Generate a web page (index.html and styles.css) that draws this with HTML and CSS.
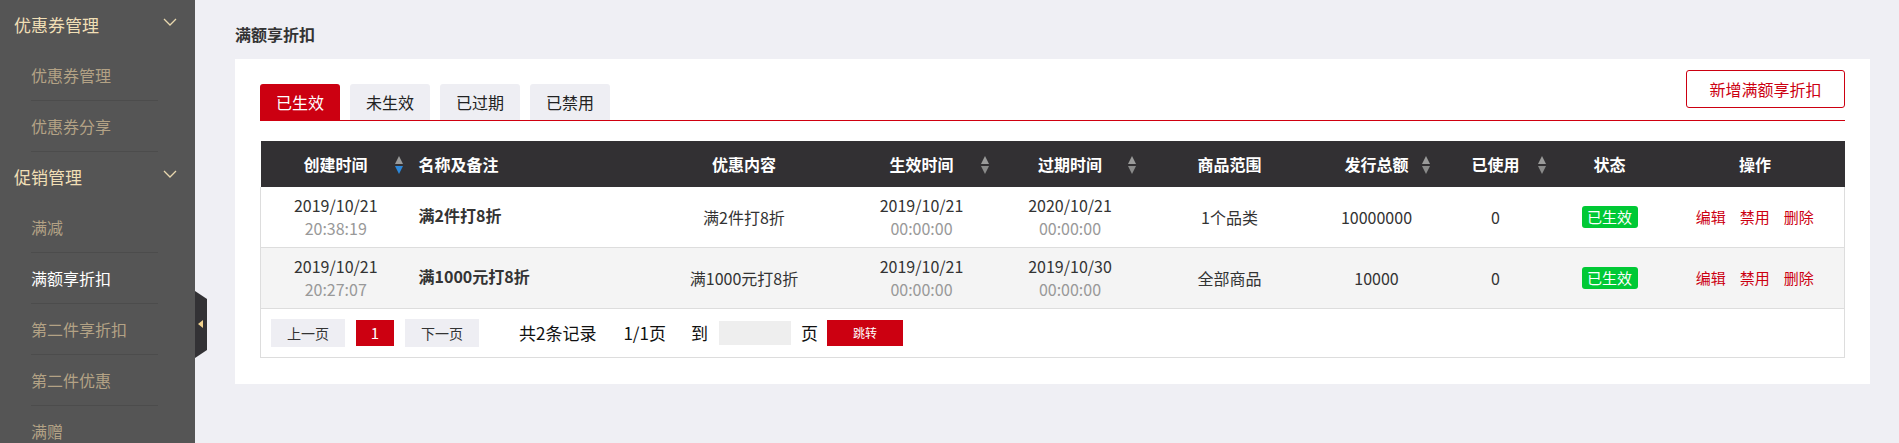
FILE: index.html
```html
<!DOCTYPE html>
<html lang="zh-CN">
<head>
    <meta charset="UTF-8">
    <meta name="viewport" content="width=device-width, initial-scale=1.0">
    <title>满额享折扣</title>
    <link rel="stylesheet" href="styles.css">
</head>
<body>
    <div class="layout">
        <aside class="sidebar">
            <div class="menu-group">
                <div class="menu-title">优惠券管理
                    <svg class="chevron" width="14" height="8" viewBox="0 0 14 8"><polyline points="1,1 7,7 13,1" fill="none" stroke="#e9d8ae" stroke-width="1.3"/></svg>
                </div>
                <ul class="menu-list">
                    <li>优惠券管理</li>
                    <li>优惠券分享</li>
                </ul>
            </div>
            <div class="menu-group">
                <div class="menu-title">促销管理
                    <svg class="chevron" width="14" height="8" viewBox="0 0 14 8"><polyline points="1,1 7,7 13,1" fill="none" stroke="#e9d8ae" stroke-width="1.3"/></svg>
                </div>
                <ul class="menu-list">
                    <li>满减</li>
                    <li class="active">满额享折扣</li>
                    <li>第二件享折扣</li>
                    <li>第二件优惠</li>
                    <li>满赠</li>
                </ul>
            </div>
        </aside>
        <div class="sidebar-toggle"><span class="toggle-arrow"></span></div>

        <main class="main">
            <h2 class="page-title">满额享折扣</h2>
            <div class="panel">
                <div class="toolbar">
                    <div class="tabs">
                        <div class="tab active">已生效</div>
                        <div class="tab">未生效</div>
                        <div class="tab">已过期</div>
                        <div class="tab">已禁用</div>
                    </div>
                    <button class="add-button">新增满额享折扣</button>
                </div>

                <table class="data-table">
                    <colgroup>
                        <col style="width:150px">
                        <col style="width:231px">
                        <col style="width:205px">
                        <col style="width:150px">
                        <col style="width:147px">
                        <col style="width:172px">
                        <col style="width:122px">
                        <col style="width:116px">
                        <col style="width:112px">
                        <col style="width:179px">
                    </colgroup>
                    <thead>
                        <tr>
                            <th class="sortable">创建时间
                                <svg class="sort" width="8" height="18" viewBox="0 0 8 18"><polygon points="0,8 4,0 8,8" fill="#9a9a9a"/><polygon points="0,10 8,10 4,18" fill="#2d87d9"/></svg>
                            </th>
                            <th class="left">名称及备注</th>
                            <th>优惠内容</th>
                            <th class="sortable">生效时间
                                <svg class="sort" width="8" height="18" viewBox="0 0 8 18"><polygon points="0,8 4,0 8,8" fill="#9a9a9a"/><polygon points="0,10 8,10 4,18" fill="#8a8a8a"/></svg>
                            </th>
                            <th class="sortable">过期时间
                                <svg class="sort" width="8" height="18" viewBox="0 0 8 18"><polygon points="0,8 4,0 8,8" fill="#9a9a9a"/><polygon points="0,10 8,10 4,18" fill="#8a8a8a"/></svg>
                            </th>
                            <th>商品范围</th>
                            <th class="sortable">发行总额
                                <svg class="sort" width="8" height="18" viewBox="0 0 8 18"><polygon points="0,8 4,0 8,8" fill="#9a9a9a"/><polygon points="0,10 8,10 4,18" fill="#8a8a8a"/></svg>
                            </th>
                            <th class="sortable">已使用
                                <svg class="sort" width="8" height="18" viewBox="0 0 8 18"><polygon points="0,8 4,0 8,8" fill="#9a9a9a"/><polygon points="0,10 8,10 4,18" fill="#8a8a8a"/></svg>
                            </th>
                            <th>状态</th>
                            <th>操作</th>
                        </tr>
                    </thead>
                    <tbody>
                        <tr>
                            <td><span class="date">2019/10/21</span><span class="time">20:38:19</span></td>
                            <td class="left name">满2件打8折</td>
                            <td>满2件打8折</td>
                            <td><span class="date">2019/10/21</span><span class="time">00:00:00</span></td>
                            <td><span class="date">2020/10/21</span><span class="time">00:00:00</span></td>
                            <td>1个品类</td>
                            <td>10000000</td>
                            <td>0</td>
                            <td><span class="badge">已生效</span></td>
                            <td class="actions"><a>编辑</a><a>禁用</a><a>删除</a></td>
                        </tr>
                        <tr class="alt">
                            <td><span class="date">2019/10/21</span><span class="time">20:27:07</span></td>
                            <td class="left name">满1000元打8折</td>
                            <td>满1000元打8折</td>
                            <td><span class="date">2019/10/21</span><span class="time">00:00:00</span></td>
                            <td><span class="date">2019/10/30</span><span class="time">00:00:00</span></td>
                            <td>全部商品</td>
                            <td>10000</td>
                            <td>0</td>
                            <td><span class="badge">已生效</span></td>
                            <td class="actions"><a>编辑</a><a>禁用</a><a>删除</a></td>
                        </tr>
                    </tbody>
                </table>

                <div class="pager">
                    <button class="page-btn">上一页</button>
                    <button class="page-num">1</button>
                    <button class="page-btn">下一页</button>
                    <span class="page-info total">共2条记录</span>
                    <span class="page-info pages">1/1页</span>
                    <span class="page-info goto">到</span>
                    <input class="page-input" type="text">
                    <span class="page-info unit">页</span>
                    <button class="jump-btn">跳转</button>
                </div>
            </div>
        </main>
    </div>
</body>
</html>
```

FILE: styles.css
```css
* {
    box-sizing: border-box;
}
body {
    margin: 0;
    font-family: "Noto Sans CJK SC", "Noto Sans", sans-serif;
    background-color: #efeff4;
    color: #333;
    height: 443px;
    overflow: hidden;
}
.layout {
    display: flex;
    height: 443px;
    position: relative;
}
.sidebar {
    width: 195px;
    flex-shrink: 0;
    background-color: #555555;
    height: 100%;
    overflow: hidden;
}
.menu-title {
    height: 50px;
    line-height: 50px;
    padding-left: 14px;
    font-size: 17px;
    color: #f0dfb5;
    position: relative;
}
.menu-title .chevron {
    position: absolute;
    left: 163px;
    top: 18px;
}
.menu-list {
    list-style: none;
    margin: 0;
    padding: 0;
}
.menu-list li {
    height: 51px;
    line-height: 50px;
    margin: 0 37px 0 31px;
    border-bottom: 1px solid #4c4c4c;
    font-size: 16px;
    color: #b3a285;
}
.menu-list li.active {
    color: #ffffff;
}
.sidebar-toggle {
    position: absolute;
    left: 195px;
    top: 291px;
    width: 12px;
    height: 67px;
    background-color: #333235;
    clip-path: polygon(0 0, 100% 12%, 100% 88%, 0 100%);
}
.toggle-arrow {
    position: absolute;
    left: 3px;
    top: 29px;
    width: 0;
    height: 0;
    border-top: 4px solid transparent;
    border-bottom: 4px solid transparent;
    border-right: 5px solid #f2d38f;
}
.main {
    flex-grow: 1;
    padding: 0 30px 0 40px;
}
.page-title {
    margin: 0;
    padding: 24px 0 15px;
    font-size: 16px;
    line-height: 20px;
    font-weight: bold;
    color: #333;
}
.panel {
    background-color: #ffffff;
    padding: 10px 25px 26px;
}
.toolbar {
    display: flex;
    justify-content: space-between;
    align-items: flex-start;
    border-bottom: 1px solid #d0000f;
}
.tabs {
    display: flex;
    gap: 10px;
    margin-top: 15px;
}
.tab {
    width: 80px;
    height: 36px;
    line-height: 36px;
    text-align: center;
    font-size: 16px;
    color: #222;
    background-color: #eeeef3;
    border-radius: 3px 3px 0 0;
}
.tab.active {
    background-color: #cc0011;
    color: #ffffff;
}
.add-button {
    width: 159px;
    height: 38px;
    margin-top: 1px;
    background: #ffffff;
    border: 1px solid #cc0011;
    border-radius: 3px;
    color: #cc0011;
    font-family: inherit;
    font-size: 16px;
    cursor: pointer;
}
.data-table {
    width: 100%;
    margin-top: 20px;
    border-collapse: collapse;
    table-layout: fixed;
}
.data-table th {
    height: 46px;
    background-color: #323033;
    color: #ffffff;
    font-size: 16px;
    font-weight: bold;
    text-align: center;
    position: relative;
    padding: 0;
}
.data-table th .sort {
    position: absolute;
    right: 8px;
    top: 15px;
}
.data-table td {
    height: 60px;
    text-align: center;
    font-size: 16px;
    line-height: 20px;
    color: #333;
    border-bottom: 1px solid #dddddd;
    padding: 0;
}
.data-table tbody tr td:first-child {
    border-left: 1px solid #dddddd;
}
.data-table tbody tr td:last-child {
    border-right: 1px solid #dddddd;
}
.data-table tr.alt td {
    background-color: #f4f4f4;
    height: 61px;
}
.data-table .left {
    text-align: left;
    padding-left: 8px;
}
.data-table .name {
    font-weight: bold;
    padding-bottom: 4px;
}
.date,
.time {
    display: block;
    line-height: 23px;
}
.time {
    color: #999;
}
.badge {
    display: inline-block;
    width: 56px;
    height: 22px;
    line-height: 22px;
    background-color: #00c935;
    color: #ffffff;
    border-radius: 3px;
    font-size: 15px;
}
.actions a {
    color: #cc0011;
    font-size: 15px;
    margin: 0 7px;
    cursor: pointer;
}
.pager {
    display: flex;
    align-items: center;
    height: 49px;
    padding: 0 10px;
    border: 1px solid #dddddd;
    border-top: none;
}
.pager button {
    font-family: inherit;
    border: none;
    cursor: pointer;
    padding: 0;
}
.page-btn {
    width: 74px;
    height: 28px;
    background-color: #eeeef3;
    font-size: 14px;
    color: #333;
}
.page-num {
    width: 38px;
    height: 26px;
    margin: 0 11px;
    background-color: #cc0011;
    color: #ffffff;
    font-size: 15px;
}
.page-info {
    font-size: 17px;
    color: #111;
}
.total {
    margin-left: 40px;
}
.pages {
    margin-left: 27px;
}
.goto {
    margin-left: 25px;
}
.page-input {
    width: 72px;
    height: 24px;
    margin-left: 11px;
    border: none;
    background-color: #eeeeee;
}
.unit {
    margin-left: 10px;
}
.jump-btn {
    width: 76px;
    height: 26px;
    margin-left: 9px;
    background-color: #cc0011;
    color: #ffffff;
    font-size: 12px;
}
```
